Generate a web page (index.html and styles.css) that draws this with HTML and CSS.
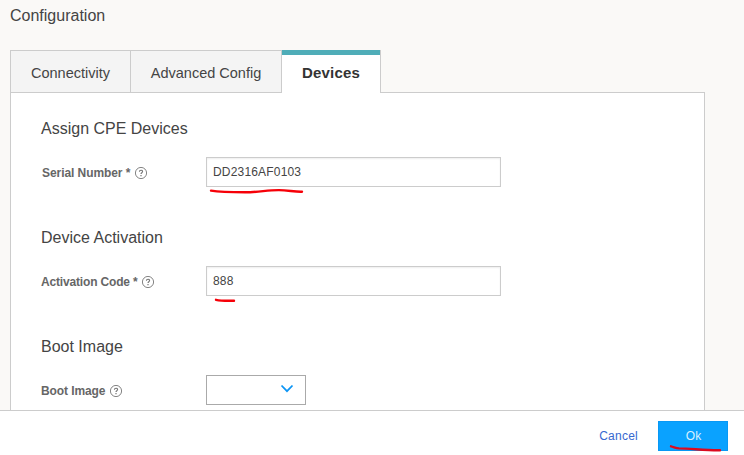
FILE: index.html
```html
<!DOCTYPE html>
<html lang="en">
<head>
<meta charset="utf-8">
<title>Configuration</title>
<link rel="stylesheet" href="styles.css">
</head>
<body>
<svg class="defs" width="0" height="0" aria-hidden="true">
  <symbol id="help" viewBox="0 0 12 12">
    <circle cx="6" cy="6" r="5.6" fill="none" stroke="#777" stroke-width=".9"/>
    <path d="M4.4 4.8C4.4 2.7 7.6 2.7 7.6 4.6C7.6 5.8 6 5.7 6 7.1" fill="none" stroke="#777" stroke-width="1.1"/>
    <path d="M5.4 8h1.2v1.2H5.4z" fill="#777"/>
  </symbol>
</svg>
<main class="page">
  <h1 class="title">Configuration</h1>
  <nav class="tabs">
    <a class="tab tab-connectivity">Connectivity</a>
    <a class="tab tab-advanced">Advanced Config</a>
    <a class="tab tab-active">Devices</a>
  </nav>
  <div class="panel">
    <section class="section">
      <h2 class="heading">Assign CPE Devices</h2>
      <div class="row">
        <div class="label label-serial"><span>Serial Number *</span><svg class="help"><use href="#help"/></svg></div>
        <div class="field"><span>DD2316AF0103</span>
          <svg class="mark mark-serial" viewBox="0 0 96 8"><path d="M2 2.6C12 4.3 23 4.3 36 4.3C50 4.3 58 2 70 2.1C79 2.2 86 4 93 3.7"/></svg>
        </div>
      </div>
    </section>
    <section class="section">
      <h2 class="heading">Device Activation</h2>
      <div class="row">
        <div class="label label-code"><span>Activation Code *</span><svg class="help"><use href="#help"/></svg></div>
        <div class="field"><span>888</span>
          <svg class="mark mark-code" viewBox="0 0 24 6"><path d="M2 1.8C8 3.1 14 2.9 20 2.7"/></svg>
        </div>
      </div>
    </section>
    <section class="section">
      <h2 class="heading">Boot Image</h2>
      <div class="row">
        <div class="label label-boot"><span>Boot Image</span><svg class="help"><use href="#help"/></svg></div>
        <div class="select"><svg class="chevron" viewBox="0 0 14 10"><path d="M1.5 1.5L7 7.2L12.5 1.5"/></svg></div>
      </div>
    </section>
  </div>
</main>
<footer class="footer">
  <a class="cancel">Cancel</a>
  <div class="ok"><span>Ok</span>
    <svg class="mark mark-ok" viewBox="0 0 54 8"><path d="M2 2.3C5 3 7 4.3 10 4.4C22 4.5 36 6.5 51 6.3"/></svg>
  </div>
</footer>
</body>
</html>
```

FILE: styles.css
```css
* { box-sizing: border-box; }
body {
  margin: 0;
  height: 455px;
  overflow: hidden;
  display: flex;
  flex-direction: column;
  background: #faf9f7;
  color: #444;
  font-family: "Liberation Sans", Arial, sans-serif;
  font-size: 12px;
}
.defs { position: absolute; }
.page {
  height: 410px;
  overflow: hidden;
  padding: 0 39px 0 10px;
}
.title {
  margin: 0;
  height: 50px;
  padding-top: 6px;
  font-size: 16px;
  line-height: 20px;
  font-weight: 400;
}
.tabs { display: flex; height: 43px; position: relative; }
.tab {
  height: 43px;
  border: 1px solid #ccc;
  border-right: 0;
  background: #f4f4f4;
  font-size: 14.5px;
  line-height: 45px;
  text-align: center;
  white-space: nowrap;
}
.tab-connectivity { width: 120px; }
.tab-advanced { width: 151px; }
.tab-active {
  width: 100px;
  border-top: 0;
  border-left: 1px solid #ccc;
  border-right: 1px solid #ccc;
  border-bottom: 0;
  background: linear-gradient(#4fadb8 5px, #fff 5px);
  color: #333;
  font-size: 15px;
  font-weight: 700;
  letter-spacing: .2px;
  line-height: 46px;
}
.panel {
  width: 695px;
  height: 340px;
  margin-top: -1px;
  padding: 26px 30px 0;
  border: 1px solid #ccc;
  background: #fff;
}
.section { height: 109px; }
.heading {
  margin: 0 0 18px;
  font-size: 16px;
  line-height: 20px;
  font-weight: 400;
}
.row { display: flex; height: 30px; }
.label {
  display: flex;
  align-items: center;
  gap: 5px;
  width: 165px;
  padding-top: 2px;
  color: #666;
  font-weight: 700;
}
.label-serial { padding-left: 1px; letter-spacing: -.07px; }
.label-code { letter-spacing: -.17px; }
.label-boot { letter-spacing: -.1px; }
.help { width: 12px; height: 12px; overflow: visible; }
.field {
  position: relative;
  width: 295px;
  height: 30px;
  padding-left: 6px;
  border: 1px solid #ccc;
  box-shadow: inset 0 1px 2px rgba(0, 0, 0, .07);
  line-height: 28px;
  letter-spacing: .18px;
}
.select {
  display: flex;
  align-items: center;
  justify-content: flex-end;
  width: 100px;
  height: 30px;
  padding: 0 11px 2px 0;
  border: 1px solid #aaa;
}
.chevron { width: 14px; height: 10px; }
.chevron path { fill: none; stroke: #0c95f5; stroke-width: 1.8; }
.mark { position: absolute; }
.mark path { fill: none; stroke: #f60008; stroke-width: 2.4; stroke-linecap: round; }
.mark-serial { left: 2px; top: 30px; width: 96px; height: 8px; }
.mark-code { left: 7px; top: 31px; width: 24px; height: 6px; }
.footer {
  display: flex;
  justify-content: flex-end;
  gap: 20px;
  height: 45px;
  padding: 10px 16px 0 0;
  border-top: 1px solid #ccc;
  background: #fff;
}
.cancel { color: #3668d0; line-height: 30px; letter-spacing: .25px; }
.ok {
  position: relative;
  width: 70px;
  height: 30px;
  border: 1px solid #0898f5;
  background: #0aa2ff;
  color: #d8f0ff;
  line-height: 28px;
  text-align: center;
  padding-left: 1px;
}
.mark-ok { left: 10px; top: 22px; width: 54px; height: 8px; }
.mark-ok path { stroke: #dc0a20; }
```
